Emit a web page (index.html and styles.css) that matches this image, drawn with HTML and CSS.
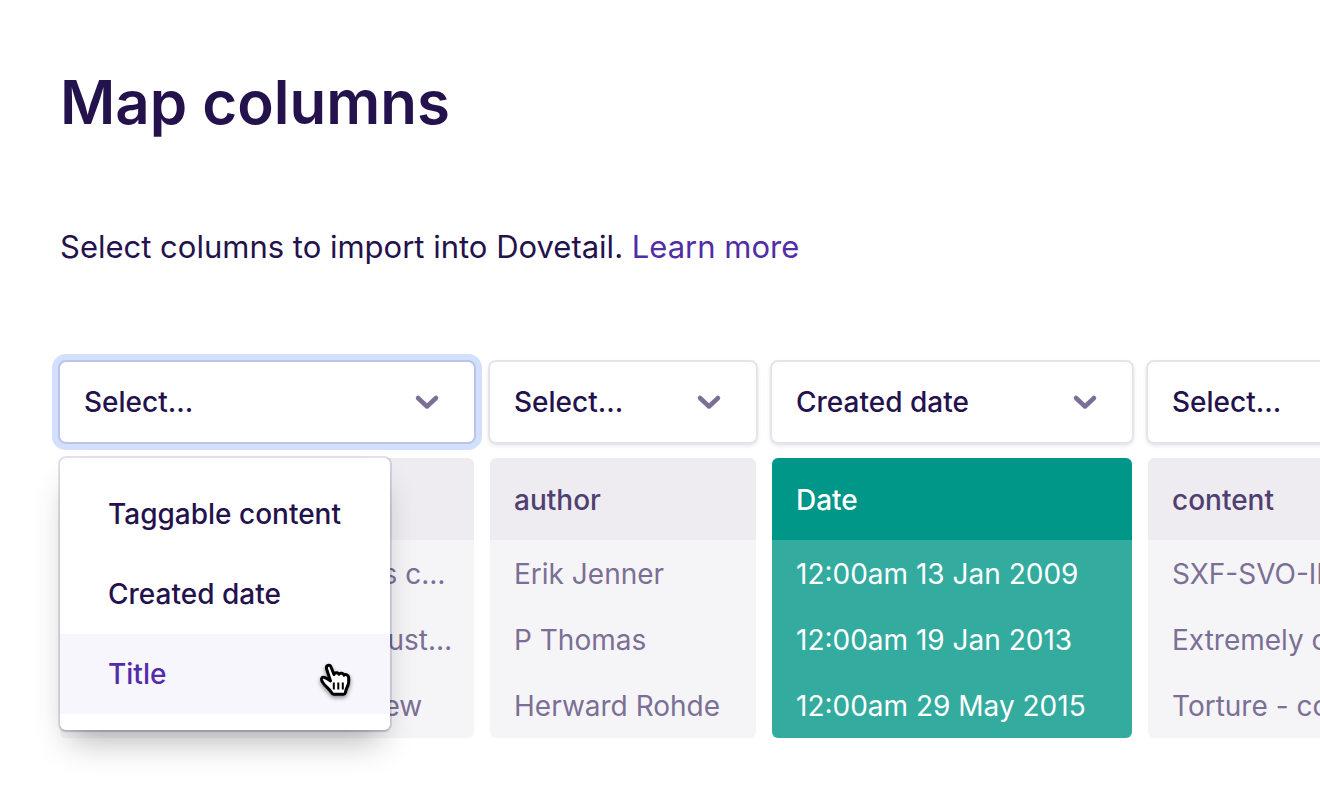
FILE: index.html
```html
<!DOCTYPE html>
<html lang="en">
<head>
<meta charset="utf-8">
<meta name="viewport" content="width=device-width, initial-scale=1">
<title>Map columns</title>
<link rel="stylesheet" href="styles.css">
</head>
<body>
<main class="page">
  <h1 class="title">Map columns</h1>
  <p class="intro">Select columns to import into Dovetail. <a class="link" href="#learn-more">Learn more</a></p>

  <div class="mapper">
    <table class="columns">
      <colgroup>
        <col class="col-title"><col class="col-author"><col class="col-date"><col class="col-content">
      </colgroup>
      <thead>
        <tr>
          <td class="picker-cell">
            <div class="picker picker-open">
              <select class="picker-select" aria-label="Map title column"><option>Select…</option></select>
              <svg class="chevron" viewBox="0 0 30 30" aria-hidden="true"><path d="M6 11l9 8.500 9-8.500"/></svg>
              <div class="menu" role="listbox" aria-label="Field">
                <button class="menu-item" type="button" role="option">Taggable content</button>
                <button class="menu-item" type="button" role="option">Created date</button>
                <button class="menu-item menu-item-active" type="button" role="option" aria-selected="true">Title</button>
                <svg class="cursor" viewBox="0 0 36 40" aria-hidden="true">
                  <path class="hand" d="M12.500 21 L8.600 9 C7.600 5.200 11.800 3.700 13 7 L16 14.500 C16.500 12.200 20.300 12 21 14.300 C22 12.500 25.500 12.800 26 15.200 C27.500 13.800 30.500 14.800 30.700 17.500 C31.200 21.500 30.500 25 28.800 28 C27.800 30 27.800 31 27.300 33 Q27 34.300 25.500 34.300 L16 34.300 Q14.500 34.300 13.500 32.500 C11.500 29 8 27 5.500 23.500 C3.500 20.800 2.700 18.500 4.300 17.400 C6.500 16.300 9 18.500 12.500 21 Z"/>
                  <path class="fingers" d="M15.800 22.500v7M20.300 22.500v7M24.800 22.500v7"/>
                </svg>
              </div>
            </div>
          </td>
          <td class="picker-cell">
            <div class="picker">
              <select class="picker-select" aria-label="Map author column"><option>Select…</option></select>
              <svg class="chevron" viewBox="0 0 30 30" aria-hidden="true"><path d="M6 11l9 8.500 9-8.500"/></svg>
            </div>
          </td>
          <td class="picker-cell">
            <div class="picker">
              <select class="picker-select" aria-label="Map Date column"><option>Created date</option></select>
              <svg class="chevron" viewBox="0 0 30 30" aria-hidden="true"><path d="M6 11l9 8.500 9-8.500"/></svg>
            </div>
          </td>
          <td class="picker-cell">
            <div class="picker">
              <select class="picker-select" aria-label="Map content column"><option>Select…</option></select>
              <svg class="chevron" viewBox="0 0 30 30" aria-hidden="true"><path d="M6 11l9 8.500 9-8.500"/></svg>
            </div>
          </td>
        </tr>
        <tr>
          <th class="head" scope="col">title</th>
          <th class="head" scope="col">author</th>
          <th class="head mapped" scope="col">Date</th>
          <th class="head" scope="col">content</th>
        </tr>
      </thead>
      <tbody>
        <tr>
          <td class="cell">Smallpox and its nurses c…</td>
          <td class="cell">Erik Jenner</td>
          <td class="cell mapped">12:00am 13 Jan 2009</td>
          <td class="cell">SXF-SVO-IHD report</td>
        </tr>
        <tr>
          <td class="cell">Feedback from some cust…</td>
          <td class="cell">P Thomas</td>
          <td class="cell mapped">12:00am 19 Jan 2013</td>
          <td class="cell">Extremely comfortable</td>
        </tr>
        <tr>
          <td class="cell">Customer panel interview</td>
          <td class="cell">Herward Rohde</td>
          <td class="cell mapped">12:00am 29 May 2015</td>
          <td class="cell">Torture - could not use</td>
        </tr>
      </tbody>
    </table>
  </div>
</main>
</body>
</html>
```
FILE: styles.css
```css
* { box-sizing: border-box; }

body {
  margin: 0;
  background: #fff;
  color: #24124d;
  font-family: Inter, "Liberation Sans", sans-serif;
  font-size: 28px;
}

.page {
  padding: 62px 0 60px 60px;
  overflow-x: clip;
}

.title {
  margin: 0;
  font-size: 60px;
  font-weight: 600;
  line-height: 80px;
}

.intro {
  margin: 81px 0 0;
  font-size: 31px;
  line-height: 48px;
}

.link { color: #512da8; text-decoration: none; }

.mapper { margin: 91px 0 0 -16px; }

.columns {
  width: 1700px;
  table-layout: fixed;
  border-collapse: separate;
  border-spacing: 16px 0;
}

.col-title { width: 414px; }
.col-author { width: 266px; }
.col-date { width: 360px; }

.picker-cell { padding: 0 0 16px; }

.picker {
  position: relative;
  display: grid;
  align-items: center;
  height: 80px;
  border-radius: 6px;
  background: #fff;
  box-shadow: 0 0 0 2px #e5e4ea, 0 2px 4px 1px rgba(36, 18, 77, 0.16);
}

.picker-open { box-shadow: 0 0 0 2px #bac6e8, 0 0 0 8px #d3e0fd; }

.picker-select {
  grid-area: 1 / 1;
  width: 100%;
  height: 80px;
  padding: 0 72px 0 24px;
  border: 0;
  border-radius: 6px;
  outline: 0;
  appearance: none;
  background: transparent;
  color: inherit;
  font: inherit;
  font-weight: 500;
}

.chevron {
  grid-area: 1 / 1;
  justify-self: end;
  width: 30px;
  height: 30px;
  margin-right: 32px;
  fill: none;
  stroke: #7c6f96;
  stroke-width: 4.5;
  stroke-linecap: round;
  stroke-linejoin: round;
  pointer-events: none;
}

.menu {
  position: absolute;
  z-index: 1;
  top: 96px;
  left: 0;
  width: 330px;
  padding: 16px 0;
  border-radius: 6px;
  background: #fff;
  box-shadow: 0 0 0 2px rgba(36, 18, 77, 0.12), 0 2px 2px rgba(0, 0, 0, 0.1), 0 20px 32px -10px rgba(0, 0, 0, 0.3);
}

.menu-item {
  display: block;
  width: 100%;
  height: 80px;
  padding: 0 0 0 48px;
  border: 0;
  background: transparent;
  color: inherit;
  font: inherit;
  font-weight: 500;
  text-align: left;
  white-space: nowrap;
}

.menu-item-active { background: #f7f6fc; color: #512da8; }

.cursor {
  position: absolute;
  right: 36px;
  bottom: 30px;
  width: 36px;
  height: 40px;
  filter: drop-shadow(0 2px 2px rgba(0, 0, 0, 0.45));
}

.hand { fill: #fff; stroke: #000; stroke-width: 3; stroke-linejoin: round; }
.fingers { fill: none; stroke: #000; stroke-width: 2; }

.head {
  height: 82px;
  padding: 2px 24px 0;
  border-radius: 6px 6px 0 0;
  background: #eeecf1;
  color: #504071;
  font-weight: 500;
  text-align: left;
}

.cell {
  height: 66px;
  padding: 2px 16px 0 24px;
  overflow: hidden;
  background: #f5f5f8;
  color: #7c6f96;
  text-overflow: ellipsis;
  white-space: nowrap;
}

tbody tr:last-child .cell { border-radius: 0 0 6px 6px; }

.head.mapped { background: #009688; color: #fff; }
.cell.mapped { background: #33ab9f; color: #fff; }
```
